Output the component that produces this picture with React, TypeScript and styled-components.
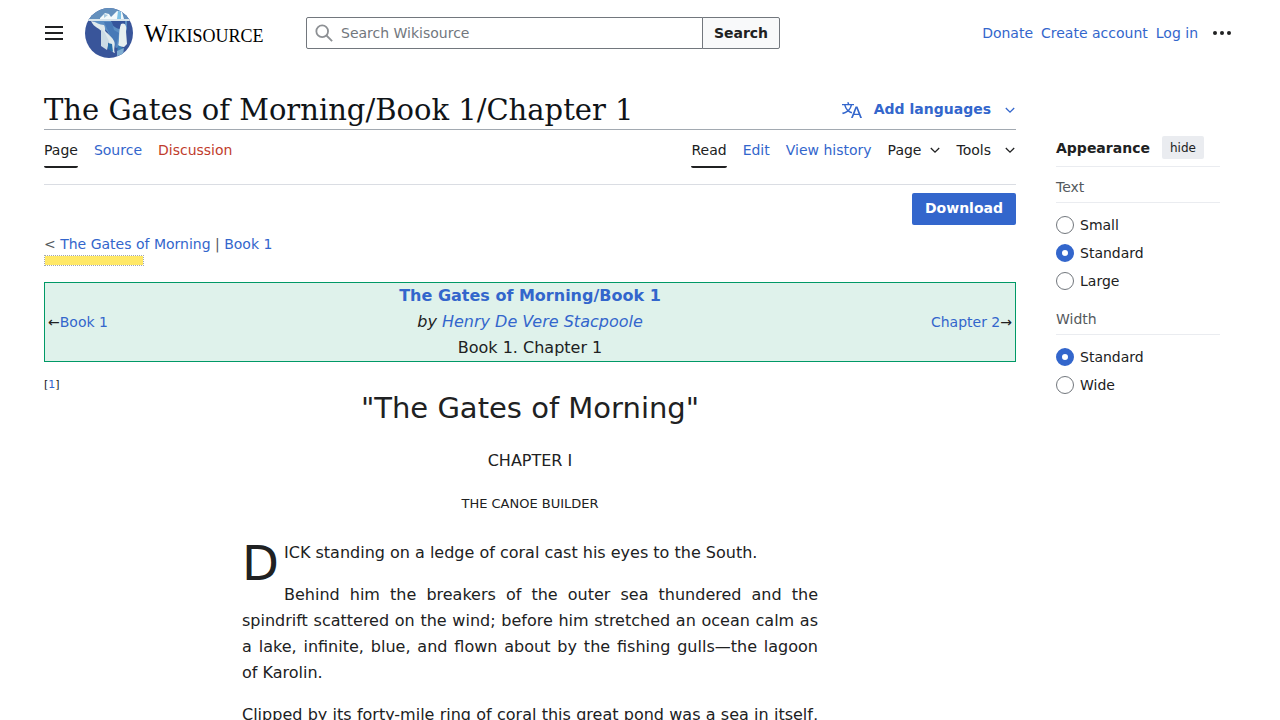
import React from "react";
import styled, { createGlobalStyle, css } from "styled-components";

const GlobalStyle = createGlobalStyle`
  *, *::before, *::after { box-sizing: border-box; }
  html { overflow-x: hidden; }
  body {
    margin: 0;
    background: #fff;
    color: #202122;
    font-family: "DejaVu Sans", sans-serif;
    font-size: 14px;
    line-height: 22px;
  }
  button, input { font: inherit; color: inherit; }
  p, h1, h2, h3 { margin: 0; font-weight: 400; }
`;

const Link = styled.a<{ $tone?: "link" | "missing" | "text" }>`
  color: ${({ $tone = "link" }) =>
    ({ link: "#3366cc", missing: "#bf3c2c", text: "#202122" })[$tone]};
  text-decoration: none;
  &:hover { text-decoration: underline; }
`;

const Header = styled.header`
  display: flex;
  align-items: center;
  height: 66px;
  padding: 0 44px;
`;

const IconButton = styled.button`
  display: flex;
  align-items: center;
  justify-content: center;
  width: 20px;
  height: 32px;
  padding: 0;
  border: 0;
  background: none;
  cursor: pointer;
`;

const Brand = styled.a`
  display: flex;
  align-items: center;
  gap: 10px;
  width: 222px;
  margin-left: 20px;
  color: #000;
  text-decoration: none;
`;

const Wordmark = styled.span`
  padding-top: 4px;
  font-family: "Liberation Serif", serif;
  font-size: 18px;
  line-height: 24px;
  white-space: nowrap;
`;

const WordmarkInitial = styled.span`
  font-size: 25px;
`;

const SearchForm = styled.form`
  display: flex;
  flex: 0 1 474px;
  height: 32px;
`;

const SearchField = styled.label`
  display: flex;
  flex: 1;
  align-items: center;
  gap: 8px;
  min-width: 0;
  padding: 0 8px;
  border: 1px solid #72777d;
  border-radius: 2px 0 0 2px;
`;

const SearchInput = styled.input`
  flex: 1;
  min-width: 0;
  padding: 0;
  border: 0;
  outline: 0;
  background: none;
  &::placeholder { color: #72777d; opacity: 1; }
`;

const SearchButton = styled.button`
  width: 78px;
  margin-left: -1px;
  padding: 0;
  border: 1px solid #72777d;
  border-radius: 0 2px 2px 0;
  background: #f8f9fa;
  font-weight: 700;
  cursor: pointer;
`;

const UserNav = styled.nav`
  display: flex;
  align-items: center;
  gap: 8px;
  margin-left: auto;
  padding-right: 4px;
  white-space: nowrap;
`;

const MoreButton = styled(IconButton)`
  margin-left: 6px;
`;

const Columns = styled.div`
  display: grid;
  grid-template-columns: minmax(0, 1fr) 164px;
  column-gap: 40px;
  padding: 24px 60px 0 44px;
`;

const TitleBar = styled.div`
  display: flex;
  align-items: center;
  justify-content: space-between;
  height: 40px;
  border-bottom: 1px solid #a2a9b1;
`;

const Title = styled.h1`
  color: #101418;
  font-family: "DejaVu Serif", serif;
  font-size: 29px;
  line-height: 40px;
`;

const LanguageButton = styled.button`
  display: flex;
  align-items: center;
  padding: 0;
  border: 0;
  background: none;
  color: #3366cc;
  font-weight: 700;
  cursor: pointer;
`;

const LanguageLabel = styled.span`
  margin: 0 13px 2px 12px;
`;

const Toolbar = styled.div`
  display: flex;
  justify-content: space-between;
  height: 55px;
  border-bottom: 1px solid #dadde3;
`;

const TabList = styled.nav`
  display: flex;
  align-items: flex-start;
  gap: 16px;
`;

const tabBox = css<{ $selected?: boolean }>`
  height: 38px;
  padding: 9px 0 0;
  border: 0;
  border-bottom: 2px solid ${({ $selected }) => ($selected ? "#202122" : "transparent")};
  border-radius: 2px;
  white-space: nowrap;
`;

const Tab = styled(Link)<{ $selected?: boolean }>`
  ${tabBox}
`;

const MenuTab = styled.button<{ $gap: number }>`
  ${tabBox}
  display: flex;
  align-items: flex-start;
  gap: ${({ $gap }) => $gap}px;
  background: none;
  cursor: pointer;
`;

const Chevron = styled.svg`
  flex: none;
  width: 12px;
  height: 22px;
`;

const DownloadRow = styled.div`
  display: flex;
  justify-content: flex-end;
  padding-top: 8px;
`;

const DownloadButton = styled.button`
  height: 32px;
  padding: 0 13px 2px;
  border: 0;
  border-radius: 2px;
  background: #3366cc;
  color: #fff;
  font-weight: 700;
  cursor: pointer;
`;

const Breadcrumb = styled.nav`
  padding-top: 8px;
  color: #54595d;
`;

const QualityBar = styled.div`
  width: 100px;
  height: 11px;
  border: 1px dotted #a2a9b1;
  background: #ffe867;
  background-clip: padding-box;
`;

const ChapterNav = styled.table`
  width: 100%;
  margin: 16px 0 14px;
  border: 1px solid #009966;
  border-spacing: 0;
  background: #dff2eb;
  font-size: 16px;
  line-height: 26px;
`;

const NavCell = styled.td<{ $align: "left" | "center" | "right" }>`
  width: ${({ $align }) => ($align === "center" ? "60%" : "20%")};
  padding: ${({ $align }) => ($align === "center" ? "0" : "0 3px")};
  font-size: ${({ $align }) => ($align === "center" ? "16px" : "14px")};
  text-align: ${({ $align }) => $align};
`;

const Reference = styled.sup`
  display: block;
  height: 18px;
  font-size: 11px;
  line-height: 18px;
`;

const Prose = styled.article`
  max-width: 576px;
  margin: 0 auto;
  font-size: 16px;
  line-height: 26px;
`;

const ChapterHeading = styled.h2`
  margin-bottom: 26px;
  font-size: 29px;
  line-height: 28px;
  text-align: center;
`;

const ChapterNumber = styled.h3`
  margin-bottom: 16px;
  font-size: 16px;
  text-align: center;
`;

const ChapterName = styled.h3`
  margin-bottom: 22px;
  font-size: 13px;
  line-height: 28px;
  text-align: center;
`;

const Paragraph = styled.p`
  margin-bottom: 16px;
  text-align: justify;
`;

const DropCap = styled.span`
  float: left;
  width: 42px;
  font-size: 48px;
  line-height: 46px;
`;

const Appearance = styled.aside`
  padding-top: 41px;
`;

const AppearanceHeader = styled.div`
  display: flex;
  align-items: center;
  gap: 12px;
  height: 36px;
  padding-bottom: 2px;
  border-bottom: 1px solid #eaecf0;
  font-weight: 700;
`;

const HideButton = styled.button`
  height: 23px;
  padding: 0 8px;
  border: 0;
  border-radius: 2px;
  background: #eaecf0;
  font-size: 12px;
  font-weight: 400;
  line-height: 22px;
  cursor: pointer;
`;

const OptionGroup = styled.fieldset`
  min-width: 0;
  margin: 0 0 4px;
  padding: 0;
  border: 0;
`;

const OptionLegend = styled.legend`
  width: 100%;
  margin-bottom: 8px;
  padding: 9px 0 4px;
  border-bottom: 1px solid #eaecf0;
  color: #54595d;
`;

const Option = styled.label`
  display: flex;
  align-items: center;
  gap: 6px;
  height: 28px;
  cursor: pointer;
`;

const Radio = styled.input`
  appearance: none;
  width: 18px;
  height: 18px;
  margin: 0;
  border: 1px solid #72777d;
  border-radius: 50%;
  background: #fff;
  &:checked { border: 6px solid #3366cc; }
`;

const Down = () => (
  <Chevron viewBox="0 0 12 22" fill="none" stroke="currentColor" strokeWidth="1.3" aria-hidden="true">
    <path d="M1.8 9 6 13.2 10.2 9" />
  </Chevron>
);

const Iceberg = () => (
  <svg width="50" height="52" viewBox="0 0 50 52" aria-hidden="true">
    <defs>
      <clipPath id="globe">
        <ellipse cx="25" cy="26" rx="24" ry="25" />
      </clipPath>
    </defs>
    <g clipPath="url(#globe)">
      <path fill="#39559a" d="M0 0h50v52H0z" />
      <path fill="#6490bd" d="M0 0h50v13H0z" />
      <path fill="#5c8fc4" d="M9 14h34v7L39 39l-7 2-9-17-9-6z" />
      <path fill="#35549b" d="M27 14h14v8c-7 1-13-2-14-8z" />
      <path fill="#4779b7" d="M20 15h8l2 8 5 3-3 15-7-15z" />
      <path fill="#dfe9ec" d="M7 14c6 1 8 4 13 4 2 4 0 5 2 7 3 3 6 5 8 9 2 4-1 8 1 12-4-1-6-5-6-9-1-4-3-8-6-11-3-5-9-5-12-12z" />
      <path fill="#cbdbe5" d="m17 22 4 4 4 8-2 9-6-4z" />
      <path fill="#e7eff0" d="M37 17c4-2 6 2 5 7l1 13-3 3-6-1c2-6 0-14 3-22z" />
      <path fill="#286da9" d="m24 36 4 1 1 8-5-3z" />
      <path fill="#3d7db4" d="m34 38 5 3-1 6-5-1z" />
      <path fill="#7fadd1" d="m33 44 7-3-1 7-6 1z" />
      <path fill="#f4fafb" d="m16 11 5-5 4 1 2 3 6-6 5 1 2 7H16z" />
      <path fill="#7cc0e5" d="m34 4 3 1v7h-4z" />
      <path fill="#a7c9df" d="m20 7 4 1-4 3z" />
      <path fill="#d7e4eb" d="M0 12h50v2H0z" />
    </g>
  </svg>
);

const textSizes = ["Small", "Standard", "Large"];
const widths = ["Standard", "Wide"];

const Options = ({ title, name, items }: { title: string; name: string; items: string[] }) => (
  <OptionGroup>
    <OptionLegend>{title}</OptionLegend>
    {items.map((item) => (
      <Option key={item}>
        <Radio type="radio" name={name} defaultChecked={item === "Standard"} />
        {item}
      </Option>
    ))}
  </OptionGroup>
);

export default function App() {
  return (
    <>
      <GlobalStyle />
      <Header>
        <IconButton aria-label="Main menu">
          <svg width="20" height="20" viewBox="0 0 20 20" fill="#202122" aria-hidden="true">
            <path d="M1 3h18v2H1zm0 6h18v2H1zm0 6h18v2H1z" />
          </svg>
        </IconButton>
        <Brand href="#">
          <Iceberg />
          <Wordmark>
            <WordmarkInitial>W</WordmarkInitial>IKISOURCE
          </Wordmark>
        </Brand>
        <SearchForm role="search" onSubmit={(event) => event.preventDefault()}>
          <SearchField>
            <svg width="18" height="18" viewBox="0 0 20 20" fill="none" stroke="#8d9094" strokeWidth="2" aria-hidden="true">
              <circle cx="8" cy="8" r="6.5" />
              <path d="m12.5 12.5 6.5 6.5" />
            </svg>
            <SearchInput type="search" placeholder="Search Wikisource" aria-label="Search Wikisource" />
          </SearchField>
          <SearchButton>Search</SearchButton>
        </SearchForm>
        <UserNav aria-label="Personal tools">
          <Link href="#">Donate</Link>
          <Link href="#">Create account</Link>
          <Link href="#">Log in</Link>
          <MoreButton aria-label="More options">
            <svg width="20" height="20" viewBox="0 0 20 20" fill="#202122" aria-hidden="true">
              <circle cx="3" cy="10" r="2" />
              <circle cx="10" cy="10" r="2" />
              <circle cx="17" cy="10" r="2" />
            </svg>
          </MoreButton>
        </UserNav>
      </Header>

      <Columns>
        <main>
          <TitleBar>
            <Title>The Gates of Morning/Book 1/Chapter 1</Title>
            <LanguageButton>
              <svg width="20" height="20" viewBox="0 0 20 20" fill="currentColor" aria-hidden="true">
                <path d="M20 18h-1.44a.6.6 0 0 1-.4-.12.8.8 0 0 1-.23-.31L17 15h-5l-1 2.54a.8.8 0 0 1-.22.3.6.6 0 0 1-.4.14H9l4.55-11.47h1.89zm-3.53-4.31L14.89 9.5a12 12 0 0 1-.39-1.24q-.09.37-.19.69l-.19.56-1.58 4.19zm-6.3-1.58a13.4 13.4 0 0 1-2.91-1.41 11.46 11.46 0 0 0 2.81-5.37H12V4H7.31a4 4 0 0 0-.2-.56C6.87 2.79 6.6 2 6.6 2l-1.47.5s.4.89.6 1.5H0v1.33h2.15A11.23 11.23 0 0 0 5 10.7a17.2 17.2 0 0 1-5 2.1q.56.82.87 1.38a23.3 23.3 0 0 0 5.22-2.51 15.6 15.6 0 0 0 3.56 1.77zM3.63 5.33h4.91a8.1 8.1 0 0 1-2.45 4.45 9.1 9.1 0 0 1-2.46-4.45" />
              </svg>
              <LanguageLabel>Add languages</LanguageLabel>
              <Down />
            </LanguageButton>
          </TitleBar>

          <Toolbar>
            <TabList aria-label="Namespaces">
              <Tab href="#" $tone="text" $selected>Page</Tab>
              <Tab href="#">Source</Tab>
              <Tab href="#" $tone="missing">Discussion</Tab>
            </TabList>
            <TabList aria-label="Views">
              <Tab href="#" $tone="text" $selected>Read</Tab>
              <Tab href="#">Edit</Tab>
              <Tab href="#">View history</Tab>
              <MenuTab $gap={7}>Page<Down /></MenuTab>
              <MenuTab $gap={13}>Tools<Down /></MenuTab>
            </TabList>
          </Toolbar>

          <DownloadRow>
            <DownloadButton>Download</DownloadButton>
          </DownloadRow>

          <Breadcrumb aria-label="Breadcrumb">
            &lt; <Link href="#">The Gates of Morning</Link> | <Link href="#">Book 1</Link>
          </Breadcrumb>
          <QualityBar />

          <ChapterNav>
            <tbody>
              <tr>
                <NavCell $align="left">←<Link href="#">Book 1</Link></NavCell>
                <NavCell $align="center">
                  <b><Link href="#">The Gates of Morning/Book 1</Link></b>
                  <br />
                  <i>by <Link href="#">Henry De Vere Stacpoole</Link></i>
                  <br />
                  Book 1. Chapter 1
                </NavCell>
                <NavCell $align="right"><Link href="#">Chapter 2</Link>→</NavCell>
              </tr>
            </tbody>
          </ChapterNav>

          <Reference>[<Link href="#">1</Link>]</Reference>

          <Prose>
            <ChapterHeading>"The Gates of Morning"</ChapterHeading>
            <ChapterNumber>CHAPTER I</ChapterNumber>
            <ChapterName>THE CANOE BUILDER</ChapterName>
            <Paragraph>
              <DropCap>D</DropCap>ICK standing on a ledge of coral cast his eyes to the South.
            </Paragraph>
            <Paragraph>
              Behind him the breakers of the outer sea thundered and the spindrift scattered on the
              wind; before him stretched an ocean calm as a lake, infinite, blue, and flown about by
              the fishing gulls—the lagoon of Karolin.
            </Paragraph>
            <Paragraph>
              Clipped by its forty-mile ring of coral this great pond was a sea in itself, a sea of
              storm in heavy winds, a lake of azure, in light airs.
            </Paragraph>
          </Prose>
        </main>

        <Appearance>
          <AppearanceHeader>
            Appearance
            <HideButton>hide</HideButton>
          </AppearanceHeader>
          <Options title="Text" name="text-size" items={textSizes} />
          <Options title="Width" name="page-width" items={widths} />
        </Appearance>
      </Columns>
    </>
  );
}
